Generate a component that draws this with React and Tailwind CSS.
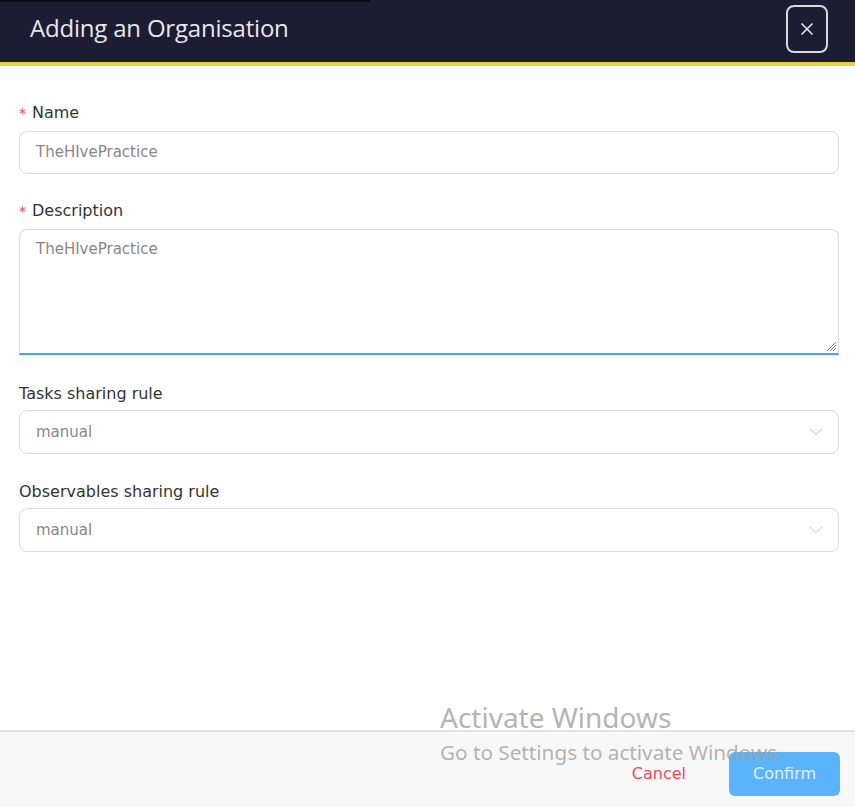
import { X, ChevronDown } from 'lucide-react'

const font = { fontFamily: '"DejaVu Sans", "Open Sans", sans-serif' }

function Label({ required, children }) {
  return (
    <label className="flex items-center gap-[6px] text-[16px] text-[#333] h-5">
      {required && <span className="text-[#f5475a] text-[14px] leading-none">*</span>}
      {children}
    </label>
  )
}

function SelectBox({ value }) {
  return (
    <div className="flex items-center justify-between h-[44px] border border-[#dcdcdc] rounded-lg pl-4 pr-[11px] text-[15px] text-[#888]">
      <span>{value}</span>
      <ChevronDown size={22} strokeWidth={1} className="text-[#bbb]" />
    </div>
  )
}

export default function App() {
  return (
    <div className="relative w-[855px] h-[807px] bg-white flex flex-col overflow-hidden" style={font}>
      {/* Header */}
      <div className="relative h-[62px] bg-[#1c1c33] flex items-center justify-between pl-[30px] pr-[27px] shrink-0">
        <div className="absolute left-0 top-0 w-[370px] h-[2px] bg-[#0b0b10]" />
        <h1 className="text-[24px] text-[#e6e6ec] tracking-[-0.2px] -mt-[6px]" style={{ fontFamily: '"Open Sans", sans-serif' }}>
          Adding an Organisation
        </h1>
        <button className="w-[42px] h-[48px] rounded-lg border-2 border-[#d8d8de] flex items-center justify-center text-[#e6e6ec] -mt-[4px]">
          <X size={20} strokeWidth={2} />
        </button>
      </div>
      <div className="h-[4px] bg-[#ecd03e] shrink-0" />

      {/* Body */}
      <div className="flex-1 pl-[19px] pr-[16px] pt-[37px] flex flex-col">
        <Label required>Name</Label>
        <div className="mt-[8px] h-[43px] border border-[#dcdcdc] rounded-lg flex items-center px-4 text-[15px] text-[#888]">
          TheHIvePractice
        </div>

        <div className="mt-[27px]"><Label required>Description</Label></div>
        <div className="relative mt-[8px] h-[126px] border border-[#dcdcdc] border-b-2 border-b-[#4aa3f0] rounded-lg rounded-b-none px-4 pt-[8px] text-[15px] text-[#888]">
          TheHIvePractice
          <svg className="absolute right-[1px] bottom-[1px]" width="12" height="12" viewBox="0 0 12 12">
            <path d="M11 2L2 11M11 5L5 11M11 8L8 11" stroke="#777" strokeWidth="1" />
          </svg>
        </div>

        <div className="mt-[29px]"><Label>Tasks sharing rule</Label></div>
        <div className="mt-[6px]"><SelectBox value="manual" /></div>

        <div className="mt-[28px]"><Label>Observables sharing rule</Label></div>
        <div className="mt-[6px]"><SelectBox value="manual" /></div>
      </div>

      {/* Footer */}
      <div className="h-[77px] shrink-0 bg-[#f8f8f8] border-t-2 border-[#e2e2e2] flex items-end justify-end gap-[43px] pr-[15px] pb-[11px]">
        <button className="text-[16px] text-[#f5475a] h-[44px]">Cancel</button>
        <button className="w-[111px] h-[44px] rounded-md bg-[#5bb4fb] text-[16px] text-[#e0f0ff]">Confirm</button>
      </div>

      {/* Windows watermark */}
      <div className="absolute left-[440px] top-[699px] pointer-events-none text-[#a0a0a0]/80" style={{ fontFamily: '"Noto Sans", "Open Sans", sans-serif' }}>
        <p className="text-[28px] leading-[36px]">Activate Windows</p>
        <p className="text-[20.7px] leading-[28px] mt-[3px]">Go to Settings to activate Windows.</p>
      </div>
    </div>
  )
}
